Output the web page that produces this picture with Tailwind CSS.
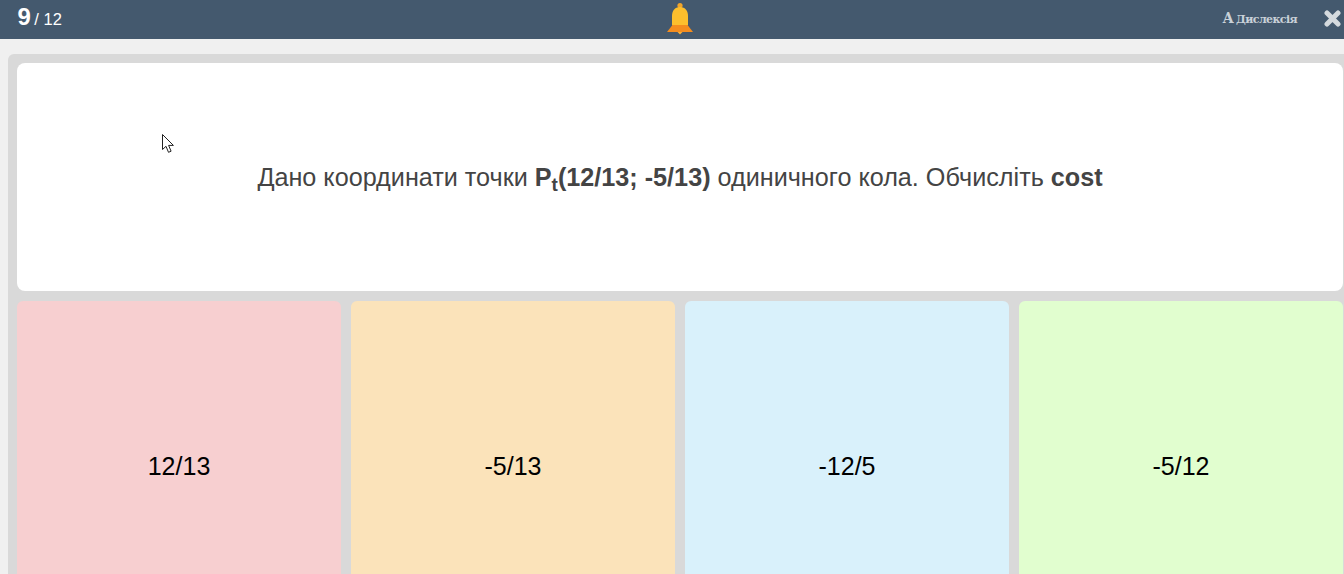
<!DOCTYPE html>
<html lang="en">
  <head>
    <meta charset="UTF-8" />
    <title>Quiz</title>
    <script src="https://cdn.jsdelivr.net/npm/@tailwindcss/browser@4"></script>
  </head>
  <body class="bg-[#f0f0f0] h-[574px] overflow-hidden font-['Liberation_Sans',sans-serif]">
    <!-- Top bar -->
    <header class="h-[39px] bg-[#44596e] flex items-center justify-between relative">
      <div class="pl-[17.500px] text-white -mt-[5px]">
        <span class="text-[24px] font-bold">9</span>
        <span class="text-[16.500px] -ml-[1px]">/ 12</span>
      </div>
      <svg class="absolute left-[666px] top-[2px]" width="28" height="34" viewBox="0 0 28 34">
        <circle cx="14" cy="3.500" r="2.600" fill="#f2a52a" />
        <path d="M14 5C8.500 5 6 9 6 14V23.500H22V14C22 9 19.500 5 14 5z" fill="#fdbf2d" />
        <path d="M6.500 23h15l5.500 7H1z" fill="#f58d1e" />
        <path d="M11.500 30h5L14 32.500z" fill="#f9b23a" />
      </svg>
      <div class="flex items-center">
        <span class="flex items-baseline gap-[3px] text-[#c9d1d8] font-bold font-['DejaVu_Serif',serif] text-[11px] tracking-[-0.6px] mr-[27px] -mt-[3px]"><span class="text-[14px]">A</span><span>Дислексія</span></span>
        <svg class="mr-[3px] -mt-[3px]" width="17" height="17" viewBox="0 0 17 17">
          <path d="M3 3l11 11M14 3L3 14" stroke="#d5dade" stroke-width="5" stroke-linecap="round" />
        </svg>
      </div>
    </header>

    <!-- Question panel -->
    <main class="mt-[15px] ml-2 w-[1360px] h-[520px] overflow-hidden bg-[#d9d9d9] rounded-tl-[6px] pl-[9px] pt-[9px]">
      <div class="w-[1326px] h-[228px] pt-[2px] bg-white rounded-[8px] flex items-center justify-center text-[#444444] text-[25.200px]">
        <p>Дано координати точки <b>P<sub class="text-[19px]">t</sub>(12/13; -5/13)</b> одиничного кола. Обчисліть <b>cost</b></p>
      </div>
      <div class="grid grid-cols-[324px_324px_324px_324px] gap-[10px] mt-[10px]">
        <div class="h-[332px] rounded-[6px] bg-[#f7cfd0] flex items-center justify-center text-black text-[25px]">12/13</div>
        <div class="h-[332px] rounded-[6px] bg-[#fbe3ba] flex items-center justify-center text-black text-[25px]">-5/13</div>
        <div class="h-[332px] rounded-[6px] bg-[#d9f1fb] flex items-center justify-center text-black text-[25px]">-12/5</div>
        <div class="h-[332px] rounded-[6px] bg-[#e1fecf] flex items-center justify-center text-black text-[25px]">-5/12</div>
      </div>
    </main>

    <!-- Mouse pointer captured in the screenshot -->
    <svg class="absolute left-[161px] top-[133px]" width="15" height="21" viewBox="0 0 15 21">
      <path d="M1.500 1.500v15l3.500-3.200 2.500 6 2.600-1.100-2.500-5.800h4.800z" fill="#fff" stroke="#222" stroke-width="1" />
    </svg>
  </body>
</html>
